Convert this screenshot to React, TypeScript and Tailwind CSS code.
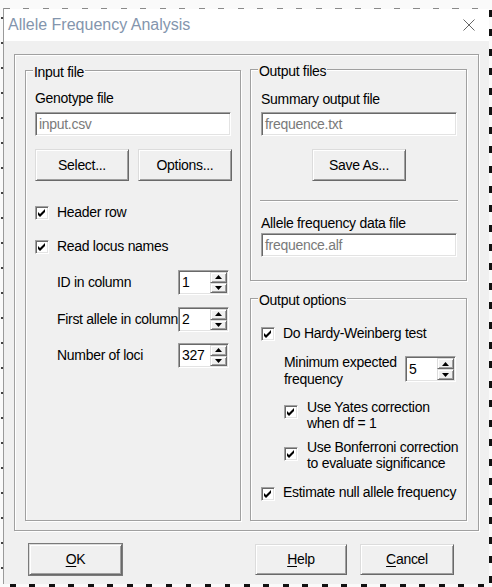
/*
  Allele Frequency Analysis dialog
  Classic Win32 look: etched group boxes, sunken edits, raised buttons
*/

const sunken =
  "border border-t-[#a0a0a0] border-l-[#a0a0a0] border-r-white border-b-white shadow-[inset_1px_1px_0_#696969,inset_-1px_-1px_0_#e3e3e3]";
const raised =
  "border border-t-[#dcdcdc] border-l-[#dcdcdc] border-r-[#696969] border-b-[#696969] shadow-[inset_1px_1px_0_#fff,inset_-1px_-1px_0_#a0a0a0] bg-[#f0f0f0]";
const etched = "border border-[#a0a0a0] shadow-[inset_1px_1px_0_#fff,1px_1px_0_#fff]";

function Group({ label, className, children }: { label: string; className: string; children?: React.ReactNode }) {
  return (
    <div className={`relative flex flex-col ${etched} ${className}`}>
      <span className="absolute left-[7px] top-[-7px] bg-[#f0f0f0] pl-[1px] pr-[1px] leading-[16px]">{label}</span>
      {children}
    </div>
  );
}

function Field({ value, className = "" }: { value: string; className?: string }) {
  return (
    <div className={`flex h-[24px] w-[196px] items-center bg-white pl-[3px] text-[#7a7a7a] ${sunken} ${className}`}>
      {value}
    </div>
  );
}

function Button({ children, size = "h-[32px] w-[94px]", className = "" }: { children: React.ReactNode; size?: string; className?: string }) {
  return (
    <div className={`flex items-center justify-center ${size} ${raised} ${className}`}>{children}</div>
  );
}

function Check({ className = "" }: { className?: string }) {
  return (
    <span className={`flex h-[14px] w-[14px] shrink-0 items-center justify-center bg-white ${sunken} ${className}`}>
      <svg width="8" height="8" viewBox="0 0 8 8">
        <polygon points="0,3 2,5 7,0 7,3 2,8 0,6" fill="#000" />
      </svg>
    </span>
  );
}

function Spin({ value, size = "h-[25px]", className = "" }: { value: string; size?: string; className?: string }) {
  return (
    <div className={`flex w-[51px] shrink-0 bg-white ${size} ${sunken} ${className}`}>
      <span className="flex-1 self-center pl-[3px]">{value}</span>
      <div className="flex w-[18px] flex-col py-[1px] pr-[1px]">
        <span className={`flex flex-1 items-center justify-center ${raised}`}>
          <svg width="7" height="4" viewBox="0 0 7 4">
            <path d="M3.5 0 L7 4 L0 4 Z" fill="#000" />
          </svg>
        </span>
        <span className={`flex flex-1 items-center justify-center ${raised}`}>
          <svg width="7" height="4" viewBox="0 0 7 4">
            <path d="M0 0 L7 0 L3.5 4 Z" fill="#000" />
          </svg>
        </span>
      </div>
    </div>
  );
}

function CheckRow({ label, className = "" }: { label: string; className?: string }) {
  return (
    <div className={`flex items-start leading-[16px] ${className}`}>
      <Check className="mt-[2px]" />
      <span className="ml-[8px] whitespace-nowrap">{label}</span>
    </div>
  );
}

function SpinRow({ label, value, className = "" }: { label: string; value: string; className?: string }) {
  return (
    <div className={`flex items-center pl-[22px] ${className}`}>
      <span className="w-[121px] whitespace-nowrap">{label}</span>
      <Spin value={value} />
    </div>
  );
}

export default function App() {
  return (
    <div className="flex h-[587px] w-[492px] flex-col overflow-hidden bg-[#fafafa] font-['Liberation_Sans',Arial,sans-serif] text-[14px] tracking-[-0.3px] text-black">
      <div className="h-[8px] shrink-0" />
      <div className="flex h-[576px] shrink-0">
        {/* left edge marks */}
        <div className="w-[3px] pl-[1px]">
          <div className="h-full w-[2px] bg-[repeating-linear-gradient(to_bottom,transparent_0_9px,#444_9px_11px,transparent_11px_25px)]" />
        </div>

        {/* window */}
        <div className="flex w-[486px] flex-col border-l border-[#9a9a9a]">
          <div className="h-[1px] shrink-0 bg-[repeating-linear-gradient(to_right,#8a8a8a_0_6px,transparent_6px_19.5px)]" />
          <div className="flex h-[32px] shrink-0 items-center justify-between bg-white pl-[4px] pr-[14px]">
            <span className="text-[16px] tracking-normal text-[#8395ad]">Allele Frequency Analysis</span>
            <svg width="12" height="12" viewBox="0 0 12 12">
              <path d="M0.5 0.5 L11.5 11.5 M11.5 0.5 L0.5 11.5" stroke="#666" strokeWidth="1" />
            </svg>
          </div>

          <div className="flex flex-1 flex-col bg-[#f0f0f0]">
            {/* outer frame */}
            <div className={`ml-[10px] mt-[13px] flex h-[477px] w-[465px] pl-[10px] pt-[14px] ${etched}`}>
              <Group label="Input file" className="mt-[1px] h-[451px] w-[216px] pl-[9px]">
                <span className="mt-[19px] leading-[16px]">Genotype file</span>
                <Field value="input.csv" className="mt-[6px]" />
                <div className="mt-[13px] flex gap-[9px]">
                  <Button>Select...</Button>
                  <Button>Options...</Button>
                </div>
                <CheckRow label="Header row" className="mt-[23px]" />
                <CheckRow label="Read locus names" className="mt-[18px]" />
                <SpinRow label="ID in column" value="1" className="mt-[16px]" />
                <SpinRow label="First allele in column" value="2" className="mt-[12px]" />
                <SpinRow label="Number of loci" value="327" className="mt-[11px]" />
              </Group>

              <div className="ml-[9px] flex w-[217px] flex-col">
                <Group label="Output files" className="h-[212px] pl-[10px]">
                  <span className="mt-[21px] leading-[16px]">Summary output file</span>
                  <Field value="frequence.txt" className="mt-[5px]" />
                  <div className="mt-[13px] flex w-[196px] justify-center">
                    <Button>Save As...</Button>
                  </div>
                  <div className="-ml-[1px] mt-[19px] h-[2px] w-[198px] border-t border-[#a0a0a0] bg-white" />
                  <span className="mt-[13px] leading-[16px]">Allele frequency data file</span>
                  <Field value="frequence.alf" className="mt-[2px]" />
                </Group>

                <Group label="Output options" className="mt-[17px] h-[223px] pl-[10px]">
                  <CheckRow label="Do Hardy-Weinberg test" className="mt-[26px]" />
                  <div className="mt-[13px] flex items-start pl-[23px]">
                    <span className="w-[121px] leading-[17px]">
                      Minimum expected
                      <br />
                      frequency
                    </span>
                    <Spin value="5" size="h-[26px]" className="mt-[2px]" />
                  </div>
                  <div className="mt-[11px] flex items-start pl-[23px] leading-[16px]">
                    <Check className="mt-[6px]" />
                    <span className="ml-[9px] whitespace-nowrap">
                      Use Yates correction
                      <br />
                      when df = 1
                    </span>
                  </div>
                  <div className="mt-[8px] flex items-start pl-[23px] leading-[16px]">
                    <Check className="mt-[8px]" />
                    <span className="ml-[9px] whitespace-nowrap">
                      Use Bonferroni correction
                      <br />
                      to evaluate significance
                    </span>
                  </div>
                  <div className="mt-[13px] flex items-start leading-[16px]">
                    <Check className="mt-[3px]" />
                    <span className="ml-[8px] whitespace-nowrap">Estimate null allele frequency</span>
                  </div>
                </Group>
              </div>
            </div>

            {/* dialog buttons */}
            <div className="mt-[13px] flex">
              <Button size="h-[31px] w-[93px]" className="ml-[25px] outline outline-1 outline-[#7a7a7a]">
                <span className="underline underline-offset-[2px]">O</span>K
              </Button>
              <Button size="h-[31px] w-[92px]" className="ml-[133px]">
                <span className="underline underline-offset-[2px]">H</span>elp
              </Button>
              <Button size="h-[31px] w-[94px]" className="ml-[13px]">
                <span className="underline underline-offset-[2px]">C</span>ancel
              </Button>
            </div>
          </div>
        </div>

        {/* right edge dashes */}
        <div className="w-[3px] bg-[repeating-linear-gradient(to_bottom,transparent_0_2px,#111_2px_9px,transparent_9px_19.5px)]" />
      </div>
      <div className="h-[3px] shrink-0 bg-[repeating-linear-gradient(to_right,transparent_0_10px,#111_10px_16px,transparent_16px_19.5px)]" />
    </div>
  );
}
